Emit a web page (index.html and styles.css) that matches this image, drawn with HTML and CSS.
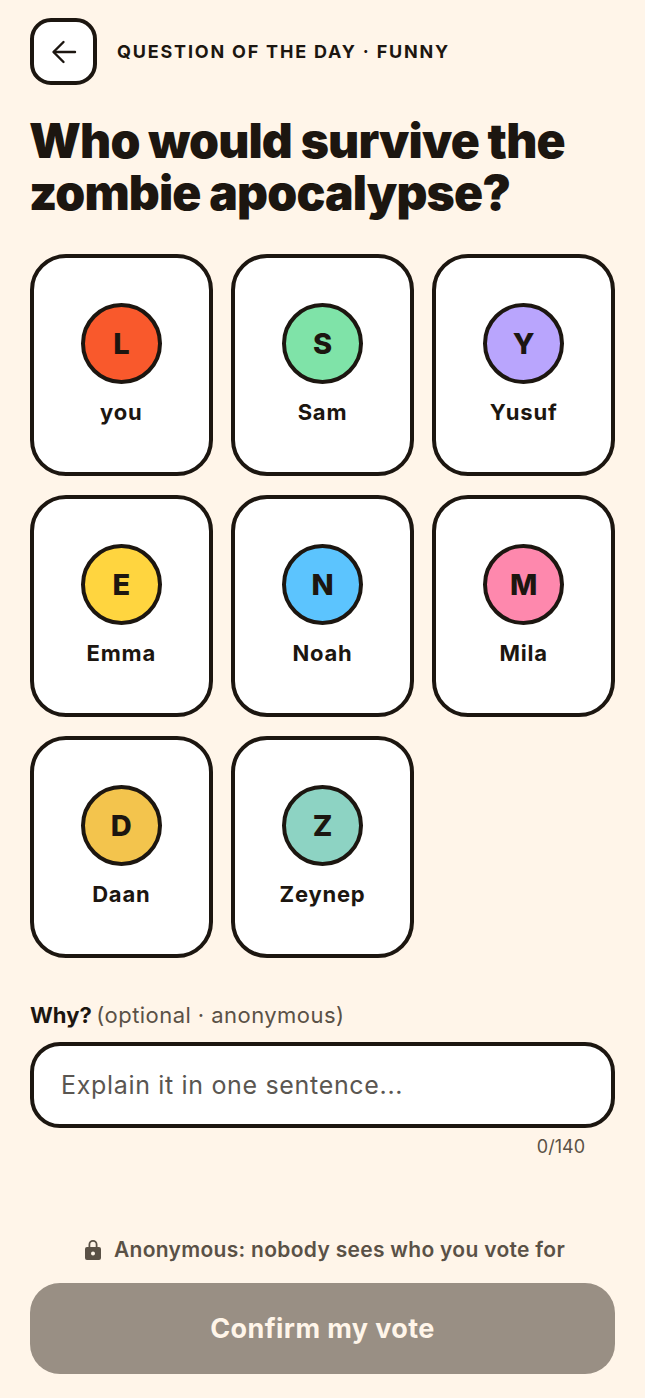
FILE: index.html
```html
<!DOCTYPE html>
<html lang="en">
<head>
  <meta charset="UTF-8"/>
  <meta name="viewport" content="width=device-width,initial-scale=1.0"/>
  <title>Question of the day</title>
  <link rel="stylesheet" href="styles.css">
</head>
<body>
  <main class="page">

    <!-- HEADER -->
    <header class="top">
      <button class="back" aria-label="Back">
        <svg width="28" height="28" viewBox="0 0 28 28" fill="none" stroke="#1c1610" stroke-width="2.4" stroke-linecap="round" stroke-linejoin="round">
          <path d="M25 14H4"/>
          <path d="M13.5 4 3.5 14l10 10"/>
        </svg>
      </button>
      <span class="eyebrow">QUESTION OF THE DAY · FUNNY</span>
    </header>

    <h1>Who would survive the zombie apocalypse?</h1>

    <!-- PEOPLE -->
    <section class="people">
      <button class="person"><span class="avatar red">L</span><span class="name">you</span></button>
      <button class="person"><span class="avatar green">S</span><span class="name">Sam</span></button>
      <button class="person"><span class="avatar purple">Y</span><span class="name">Yusuf</span></button>
      <button class="person"><span class="avatar yellow">E</span><span class="name">Emma</span></button>
      <button class="person"><span class="avatar blue">N</span><span class="name">Noah</span></button>
      <button class="person"><span class="avatar pink">M</span><span class="name">Mila</span></button>
      <button class="person"><span class="avatar amber">D</span><span class="name">Daan</span></button>
      <button class="person"><span class="avatar teal">Z</span><span class="name">Zeynep</span></button>
    </section>

    <!-- REASON -->
    <section class="why">
      <p class="why-label"><b>Why?</b> (optional · anonymous)</p>
      <div class="why-input">Explain it in one sentence...</div>
      <p class="counter">0/140</p>
    </section>

    <!-- FOOTER -->
    <footer class="bottom">
      <p class="notice">
        <svg width="18" height="22" viewBox="0 0 18 22">
          <path fill="#5a5146" fill-rule="evenodd" d="M4.5 8V5.5a4.5 4.5 0 0 1 9 0V8H15a2 2 0 0 1 2 2v9a2 2 0 0 1-2 2H3a2 2 0 0 1-2-2v-9a2 2 0 0 1 2-2h1.5ZM6.3 8h5.4V5.5a2.7 2.7 0 0 0-5.4 0V8ZM9 12.4a2 2 0 1 0 0 4 2 2 0 0 0 0-4Z"/>
        </svg>
        Anonymous: nobody sees who you vote for
      </p>
      <button class="confirm">Confirm my vote</button>
    </footer>
  </main>
</body>
</html>
```

FILE: styles.css
```css
* { box-sizing: border-box; }
html, body { margin: 0; padding: 0; }
body { background: #fff5e9; color: #1c1610; font-family: Inter, "Noto Sans", sans-serif; }
button { font-family: inherit; color: inherit; cursor: pointer; }
p { margin: 0; }

.page { display: flex; flex-direction: column; height: 1398px; padding: 18px 30px 24px; }

.top { display: flex; align-items: center; gap: 20px; }
.back { display: flex; align-items: center; justify-content: center; width: 67px; height: 67px; padding: 0; background: #fff; border: 4px solid #1c1610; border-radius: 21px; }
.eyebrow { font-size: 18px; font-weight: 700; letter-spacing: 1.8px; }

h1 { margin: 30px 0 0 -1px; font-size: 48px; line-height: 52px; font-weight: 900; letter-spacing: -0.85px; }

.people { display: grid; grid-template-columns: repeat(3, 1fr); gap: 19px 18.5px; margin-top: 35px; }
.person { display: flex; flex-direction: column; align-items: center; height: 222px; padding: 45px 0 0; background: #fff; border: 4px solid #1c1610; border-radius: 36px; }
.avatar { display: flex; align-items: center; justify-content: center; width: 81px; height: 81px; border: 4px solid #1c1610; border-radius: 50%; font-size: 29px; font-weight: 800; }
.name { margin-top: 15px; font-size: 22px; line-height: 26px; font-weight: 700; letter-spacing: 0.8px; }

.red { background: #f9592c; }
.green { background: #7fe3a8; }
.purple { background: #b9a5fd; }
.yellow { background: #ffd53f; }
.blue { background: #5cc4fe; }
.pink { background: #fe88ad; }
.amber { background: #f3c44d; }
.teal { background: #8dd3c3; }

.why { margin-top: 43px; }
.why-label { font-size: 22px; line-height: 28px; letter-spacing: 0.45px; color: #5a5146; }
.why-label b { margin-right: -2px; color: #1c1610; font-weight: 700; letter-spacing: 0; }
.why-input { display: flex; align-items: center; height: 86px; margin-top: 13px; padding: 0 27px; background: #fff; border: 4px solid #1c1610; border-radius: 30px; font-size: 25px; letter-spacing: 0.67px; color: #5a5651; }
.counter { margin-top: 8px; padding-right: 30px; text-align: right; font-size: 18px; line-height: 22px; color: #5a5146; }

.bottom { margin-top: auto; }
.notice { display: flex; align-items: center; justify-content: center; gap: 12px; padding-left: 4px; font-size: 21px; line-height: 26px; font-weight: 600; letter-spacing: 0.3px; color: #5a5146; }
.confirm { display: block; width: 100%; height: 91px; margin-top: 20px; background: #998f84; border: 0; border-radius: 30px; font-size: 27px; font-weight: 700; letter-spacing: 0.4px; color: #fff5e9; }
```
